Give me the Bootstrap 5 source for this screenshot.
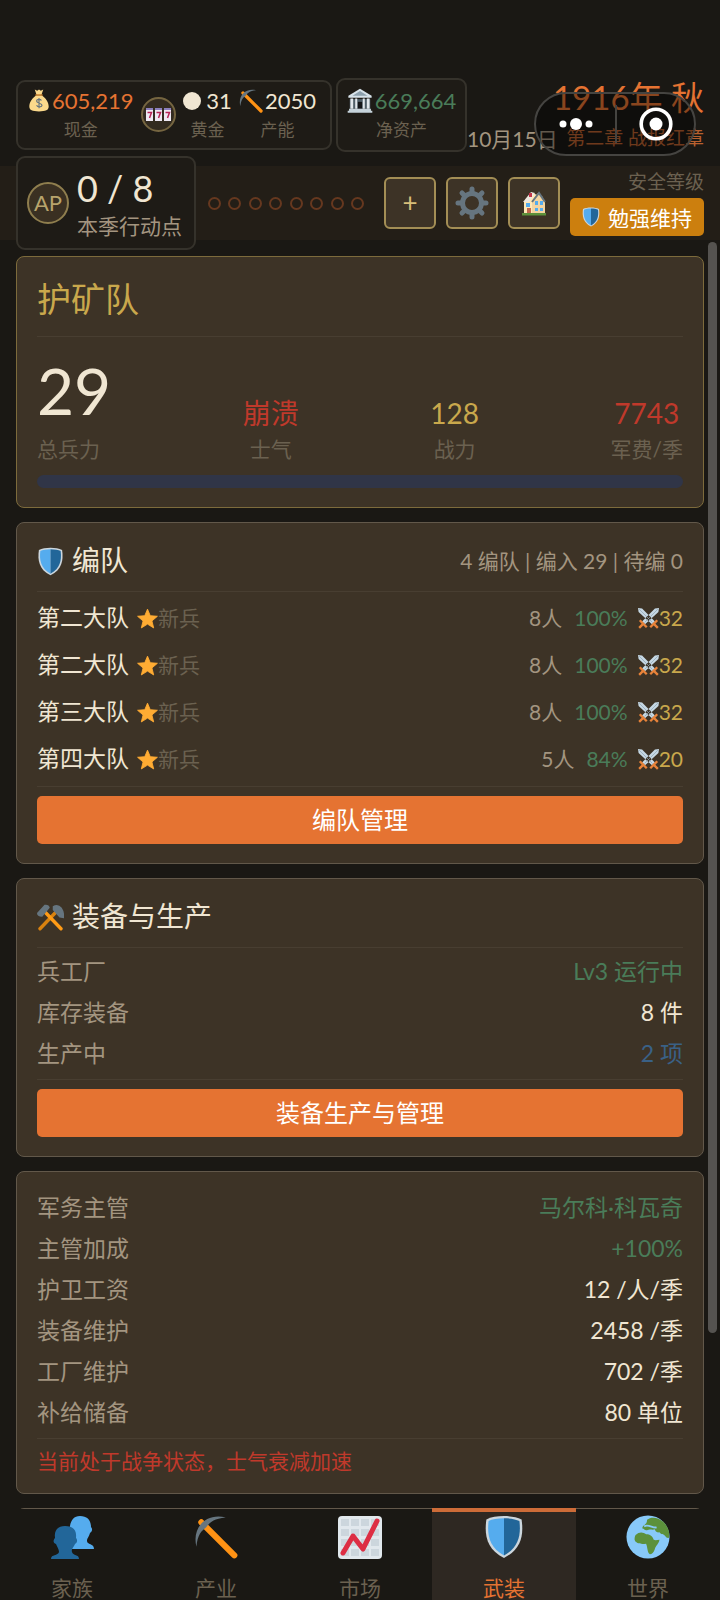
<!DOCTYPE html>
<html lang="zh-CN">
<head>
<meta charset="utf-8">
<meta name="viewport" content="width=device-width, initial-scale=1">
<title>护矿队</title>
<link href="https://cdn.jsdelivr.net/npm/bootstrap@5.3.0/dist/css/bootstrap.min.css" rel="stylesheet">
<style>
:root{--ink:#f0e6d2;--dim:#a39580;--faint:#6b6150;--gold:#c9a84c;--orange:#e57332;--green:#4a7c59;--red:#c0392b;--blue:#3a6186;--bg:#1a1814;--panel:#3d3326}
body{background:var(--bg);color:var(--ink);font-family:Lato,"Noto Sans CJK SC",sans-serif;font-size:23px;line-height:1.3}
.screen{height:100vh}
.c-dim{color:var(--dim)}.c-faint{color:var(--faint)}.c-gold{color:var(--gold)}.c-orange{color:var(--orange)}
.c-green{color:var(--green)}.c-red{color:var(--red)}.c-blue{color:var(--blue)}.c-rust{color:#b8602f}
.fs-tag{font-size:17px}.fs-sub{font-size:19px}.fs-note{font-size:21px}.fs-val{font-size:28px}
svg{display:block;flex:none}
/* header */
.topbar{padding:77px 16px 14px}
.stat-box{border:2px solid #35322b;border-radius:9px;background:#1e1b16}
.res-box{height:70px;width:316px;padding:0 10px}
.asset-box{height:74px;width:131px;margin-left:4px}
.stat-num{font-size:22px;line-height:30px;gap:2px}
.stat-cell .fs-tag{line-height:28px}
.slot{width:35px;height:35px;border:2px solid #756540;border-radius:50%;background:#332b20;padding:0}
.orb{width:18px;height:18px;margin-right:3px;border-radius:50%;background:var(--ink)}
.season{font-size:33px;line-height:40px}
.capsule{right:24px;top:92px;width:162px;height:64px;border:2px solid #454441;border-radius:32px;background:rgba(0,0,0,.4)}
.capsule button{background:none;border:0;padding:0}
.capsule .split{width:2px;height:38px;background:#454441}
.ap-bar{background:#231e17;height:74px;padding:0 16px}
.ap-box{width:180px;height:94px;margin:-10px 0;padding:0 9px}
.ap-mark{width:42px;height:42px;border:2px solid #8f7e4e;border-radius:50%;background:#3a3022;color:#b8a46c;font-size:22px}
.ap-count{font-size:36px;line-height:40px}
.pips{margin:0 20px 0 12px}
.pip{width:13px;height:13px;border:2px solid #66381f;border-radius:50%}
.tools{gap:10px;margin-right:10px}
.tool{width:52px;height:52px;border:2px solid #a38e55;border-radius:6px;background:var(--panel);color:#d8bf7a;padding:0;font-size:26px}
.status{background:#cc7f0e;border-radius:5px;width:134px;height:38px}
/* content */
.feed{padding:16px 16px 0}
.panel{background:var(--panel);border:1px solid #62584a;border-radius:8px;padding:0 20px 19px;margin-bottom:14px}
.panel-gold{border-color:#7d6b3c}
.rule{border-bottom:1px solid #483e31}
.title-lg{font-size:34px;height:80px;margin:0;padding-top:6px;font-weight:400}
.title-md{font-size:28px;margin:0;font-weight:400}
.head{height:69px;padding-top:9px}
.stats{padding-top:22px}
.big{font-size:64px;line-height:64px}
.meter{height:13px;border-radius:7px;background:#303547;margin-top:12px}
.squads{padding:3px 0}
.squad{height:47px}
.health{margin:0 10px 0 12px}
.line{height:41px}
.rows{padding:4px 0}
.act{background:var(--orange);color:#fff;border:0;border-radius:5px;height:48px;font-size:24px;padding:0;margin-top:9px}
.thumb{right:3px;top:2px;width:9px;height:86%;border-radius:5px;background:#555350}
/* tabs */
.tabs{height:91px;background:var(--bg)}
.tabs a{flex:1 1 0;color:var(--faint);font-size:21px;padding-top:6px;gap:15px}
.tabs a.on{color:var(--orange);background:#2e2822;border-top:4px solid #cd6c38;margin-top:-1px;padding-top:3px}
</style>
</head>
<body>
<svg width="0" height="0" class="position-absolute" aria-hidden="true">
<symbol id="shield" viewBox="0 0 36 40"><path d="M18 1C12 1 6 2 2 4 0 18 2 31 18 39 34 31 36 18 34 4 30 2 24 1 18 1Z" fill="#ccd6dd"/><path d="M18 3C12 3 7 4 4 5.500 2.500 18 4.500 29.500 18 36.800Z" fill="#55acee"/><path d="M18 3c6 0 11 1 14 2.500C33.500 18 31.500 29.500 18 36.800Z" fill="#226699"/></symbol>
<symbol id="star" viewBox="0 0 36 36"><path d="M18 2l4.700 11.200 12.300 1-9.400 8 3 12L18 27.600 7.400 34.200l3-12-9.400-8 12.300-1Z" fill="#ffac33" stroke="#ffac33" stroke-width="1.500" stroke-linejoin="round"/></symbol>
<symbol id="pick" viewBox="0 0 36 36"><path d="M6 6L33 33" stroke="#ff9214" stroke-width="5" stroke-linecap="round"/><path d="M2 26C-2 10 10-2 26 2 16 3 13 6 10 10 6 13 3 16 2 26Z" fill="#66757f"/></symbol>
<symbol id="swords" viewBox="0 0 36 36"><path d="M0 0l7 1 22 22-5 5L1 7ZM36 0l-7 1L7 23l5 5L35 7Z" fill="#c6d8e4"/><path d="M2 2l23 23M34 2L11 25" stroke="#8ea2b0" stroke-width="1.200"/><path d="M3 21l12 12M33 21L21 33M8 28l-6 6M28 28l6 6" stroke="#e8833a" stroke-width="4"/></symbol>
<symbol id="hammers" viewBox="0 0 36 36"><path d="M4 33L26 10" stroke="#d9820f" stroke-width="4.500" stroke-linecap="round"/><path d="M32 33L10 10" stroke="#ff9b16" stroke-width="4.500" stroke-linecap="round"/><path d="M0 12L10 1q6-1 7 4L7 17Q0 17 0 12ZM21 3q7-4 12 2 4 6 3 14l-6-1-9-10Z" fill="#66757f"/></symbol>
<symbol id="bag" viewBox="0 0 36 38"><path d="M11 1l4 2 3-2 3 2 4-2-3 9c7 5 12 12 12 19 0 6-5 8-16 8S2 35 2 29C2 22 7 15 14 10Z" fill="#fbd98b"/><path d="M12 10h12" stroke="#bf7a2c" stroke-width="2.500"/><path d="M22 19c-2-3-8-2-8 1 0 4 9 3 9 7 0 3-7 4-9 0M18 15v17" stroke="#67757f" stroke-width="2" fill="none"/></symbol>
<symbol id="bank" viewBox="0 0 38 36"><path d="M19 1L36 11v3H2v-3Z" fill="#d8e3ea"/><path d="M19 4l11 7H8Z" fill="#8da0ad"/><path d="M4 16h30v14H4Z" fill="#50606a"/><path d="M5 15h4v15H5ZM12 15h3v15h-3ZM23 15h3v15h-3ZM29 15h4v15h-4Z" fill="#e1e8ed"/><path d="M16 20h6v10h-6Z" fill="#14171a"/><path d="M3 30h32v3H3ZM1 33h36v3H1Z" fill="#c5d2da"/></symbol>
</svg>
<div class="screen d-flex flex-column overflow-hidden position-relative">
  <header>
    <div class="topbar d-flex align-items-center">
      <div class="stat-box res-box d-flex align-items-center justify-content-between flex-shrink-0">
        <div class="stat-cell text-center c-orange"><div class="stat-num d-flex align-items-center"><svg width="22" height="23"><use href="#bag"/></svg>605,219</div><div class="fs-tag c-faint">现金</div></div>
        <button class="slot d-flex align-items-center justify-content-center" aria-label="老虎机"><svg width="25" height="15" viewBox="0 0 25 15"><path d="M0 1h7v13H0ZM9 1h7v13H9ZM18 1h7v13h-7Z" fill="#eee8f2"/><path d="M0 1h7v2H0ZM9 1h7v2H9ZM18 1h7v2h-7Z" fill="#8c80be"/><path d="M1.500 5.500h4l-2 5.500M10.500 5.500h4l-2 5.500M19.500 5.500h4l-2 5.500" stroke="#b72457" stroke-width="1.500" fill="none"/></svg></button>
        <div class="stat-cell text-center"><div class="stat-num d-flex align-items-center"><span class="orb"></span>31</div><div class="fs-tag c-faint">黄金</div></div>
        <div class="stat-cell text-center pe-1"><div class="stat-num d-flex align-items-center"><svg width="24" height="24"><use href="#pick"/></svg>2050</div><div class="fs-tag c-faint">产能</div></div>
      </div>
      <div class="stat-box asset-box d-flex align-items-center justify-content-center flex-shrink-0">
        <div class="stat-cell text-center c-green"><div class="stat-num d-flex align-items-center"><svg width="26" height="25"><use href="#bank"/></svg>669,664</div><div class="fs-tag c-faint">净资产</div></div>
      </div>
      <div class="flex-grow-1 text-end text-nowrap">
        <div class="season c-orange">1916年 秋</div>
        <div class="d-flex justify-content-between align-items-center pt-2"><span class="c-dim fs-note">10月15日</span><span class="fs-sub c-rust">第二章 战报红章</span></div>
      </div>
    </div>
    <div class="capsule position-absolute d-flex align-items-center">
      <button class="flex-fill d-flex justify-content-center" aria-label="更多"><svg width="36" height="14" fill="#fff"><circle cx="5" cy="7" r="3.500"/><circle cx="18" cy="7" r="6"/><circle cx="31" cy="7" r="3.500"/></svg></button>
      <span class="split"></span>
      <button class="flex-fill d-flex justify-content-center" aria-label="关闭"><svg width="34" height="34"><circle cx="17" cy="17" r="14.800" fill="none" stroke="#fff" stroke-width="3.600"/><circle cx="17" cy="17" r="6.500" fill="#fff"/></svg></button>
    </div>
    <div class="ap-bar d-flex align-items-center">
      <div class="stat-box ap-box d-flex align-items-center gap-2 flex-shrink-0">
        <div class="ap-mark d-flex align-items-center justify-content-center flex-shrink-0">AP</div>
        <div class="text-nowrap"><div class="ap-count">0 / 8</div><div class="fs-note c-dim mt-1">本季行动点</div></div>
      </div>
      <div class="pips d-flex flex-fill justify-content-between"><i class="pip"></i><i class="pip"></i><i class="pip"></i><i class="pip"></i><i class="pip"></i><i class="pip"></i><i class="pip"></i><i class="pip"></i></div>
      <div class="tools d-flex flex-shrink-0">
        <button class="tool" aria-label="增加">+</button>
        <button class="tool d-flex align-items-center justify-content-center" aria-label="设置"><svg width="34" height="34" viewBox="-17 -17 34 34"><circle r="9.500" fill="none" stroke="#66757f" stroke-width="5"/><g stroke="#66757f" stroke-width="5" stroke-linecap="round"><path d="M0-11.500V-14M0 11.500V14M-11.500 0H-14M11.500 0H14M8-8l2-2M-8 8l-2 2M8 8l2 2M-8-8l-2-2"/></g></svg></button>
        <button class="tool d-flex align-items-center justify-content-center" aria-label="家园"><svg width="26" height="26" viewBox="0 0 26 26"><path d="M3 12l8-9 11 4v17H3Z" fill="#ffe8b6"/><path d="M11 11l6-8 7 9v12H11Z" fill="#f3d4a0"/><path d="M2 12L10 2l4 1-6 9Z" fill="#eee8df"/><path d="M11 12l7-9 6 9" stroke="#66757f" stroke-width="2" fill="none"/><path d="M8 3h3v4H8Z" fill="#c1364b"/><path d="M5 13h4v4H5ZM14 11h3v4h-3ZM19 11h3v4h-3ZM14 18h3v3h-3ZM19 18h3v3h-3Z" fill="#55acee"/><path d="M6 18h4v6H6Z" fill="#c1694f"/><path d="M1 23h24v2.500H1Z" fill="#5c913b"/></svg></button>
      </div>
      <div class="text-end flex-shrink-0"><div class="fs-sub c-faint lh-sm mb-1">安全等级</div>
        <div class="status fs-note text-white d-flex align-items-center justify-content-center gap-2"><svg width="18" height="20"><use href="#shield"/></svg>勉强维持</div></div>
    </div>
  </header>

  <div class="flex-grow-1 position-relative overflow-hidden">
  <main class="feed">
    <section class="panel panel-gold">
      <h1 class="title-lg rule c-gold d-flex align-items-center">护矿队</h1>
      <div class="stats d-flex justify-content-between align-items-end">
        <div><div class="big">29</div><div class="fs-note c-faint mt-2 pt-1">总兵力</div></div>
        <div class="text-center"><div class="fs-val c-red">崩溃</div><div class="fs-note c-faint mt-1">士气</div></div>
        <div class="text-center"><div class="fs-val c-gold">128</div><div class="fs-note c-faint mt-1">战力</div></div>
        <div class="text-center"><div class="fs-val c-red">7743</div><div class="fs-note c-faint mt-1">军费/季</div></div>
      </div>
      <div class="meter"></div>
    </section>

    <section class="panel">
      <div class="head rule d-flex align-items-center justify-content-between"><h2 class="title-md d-flex align-items-center gap-2"><svg width="27" height="29"><use href="#shield"/></svg>编队</h2><span class="fs-note c-dim">4 编队 | 编入 29 | 待编 0</span></div>
      <div class="squads rule">
        <div class="squad d-flex align-items-center"><span class="me-2">第二大队</span><svg width="21" height="21"><use href="#star"/></svg><span class="fs-note c-faint">新兵</span><span class="fs-note c-dim ms-auto">8人</span><span class="fs-note c-green health">100%</span><svg width="21" height="21"><use href="#swords"/></svg><span class="c-gold fs-note">32</span></div>
        <div class="squad d-flex align-items-center"><span class="me-2">第二大队</span><svg width="21" height="21"><use href="#star"/></svg><span class="fs-note c-faint">新兵</span><span class="fs-note c-dim ms-auto">8人</span><span class="fs-note c-green health">100%</span><svg width="21" height="21"><use href="#swords"/></svg><span class="c-gold fs-note">32</span></div>
        <div class="squad d-flex align-items-center"><span class="me-2">第三大队</span><svg width="21" height="21"><use href="#star"/></svg><span class="fs-note c-faint">新兵</span><span class="fs-note c-dim ms-auto">8人</span><span class="fs-note c-green health">100%</span><svg width="21" height="21"><use href="#swords"/></svg><span class="c-gold fs-note">32</span></div>
        <div class="squad d-flex align-items-center"><span class="me-2">第四大队</span><svg width="21" height="21"><use href="#star"/></svg><span class="fs-note c-faint">新兵</span><span class="fs-note c-dim ms-auto">5人</span><span class="fs-note c-green health">84%</span><svg width="21" height="21"><use href="#swords"/></svg><span class="c-gold fs-note">20</span></div>
      </div>
      <button class="act w-100 d-block">编队管理</button>
    </section>

    <section class="panel">
      <div class="head rule d-flex align-items-center"><h2 class="title-md d-flex align-items-center gap-2"><svg width="27" height="27"><use href="#hammers"/></svg>装备与生产</h2></div>
      <div class="rows rule">
        <div class="line d-flex align-items-center justify-content-between"><span class="c-dim">兵工厂</span><span class="c-green">Lv3 运行中</span></div>
        <div class="line d-flex align-items-center justify-content-between"><span class="c-dim">库存装备</span><span>8 件</span></div>
        <div class="line d-flex align-items-center justify-content-between"><span class="c-dim">生产中</span><span class="c-blue">2 项</span></div>
      </div>
      <button class="act w-100 d-block">装备生产与管理</button>
    </section>

    <section class="panel">
      <div class="rows rule pt-3">
        <div class="line d-flex align-items-center justify-content-between"><span class="c-dim">军务主管</span><span class="c-green">马尔科·科瓦奇</span></div>
        <div class="line d-flex align-items-center justify-content-between"><span class="c-dim">主管加成</span><span class="c-green">+100%</span></div>
        <div class="line d-flex align-items-center justify-content-between"><span class="c-dim">护卫工资</span><span>12 /人/季</span></div>
        <div class="line d-flex align-items-center justify-content-between"><span class="c-dim">装备维护</span><span>2458 /季</span></div>
        <div class="line d-flex align-items-center justify-content-between"><span class="c-dim">工厂维护</span><span>702 /季</span></div>
        <div class="line d-flex align-items-center justify-content-between"><span class="c-dim">补给储备</span><span>80 单位</span></div>
      </div>
      <div class="fs-note c-red pt-2">当前处于战争状态，士气衰减加速</div>
    </section>
    <section class="panel"></section>
  </main>
  <div class="thumb position-absolute"></div>
  </div>

  <nav class="tabs d-flex flex-shrink-0 position-relative">
    <a href="#" class="d-flex flex-column align-items-center text-decoration-none"><svg width="44" height="44" viewBox="0 0 44 44"><path d="M30 1c7 0 11 4 11 11 2 2 1 5-1 6-1 4-3 5-3 8 0 4 7 2 7 8H22V20c-3-3-3-5-2-9 1-6 4-10 10-10Z" fill="#55acee"/><path d="M15 11c8 0 12 4 11 12 2 2 1 5-1 6-1 3-4 5-3 8 1 4 7 2 7 7H1c0-5 7-3 8-7 0-3-2-5-3-8-3-1-3-4-1-6-1-8 3-12 10-12Z" fill="#226699"/></svg>家族</a>
    <a href="#" class="d-flex flex-column align-items-center text-decoration-none"><svg width="44" height="44"><use href="#pick"/></svg>产业</a>
    <a href="#" class="d-flex flex-column align-items-center text-decoration-none"><svg width="44" height="44" viewBox="0 0 44 44"><rect x="0" y="1" width="44" height="43" rx="4" fill="#e1e8ed"/><path d="M3 4h8v7H3ZM13 4h8v7h-8ZM23 4h8v7h-8ZM33 4h8v7h-8ZM3 14h8v7H3ZM13 14h8v7h-8ZM23 14h8v7h-8ZM33 14h8v7h-8ZM3 24h8v7H3ZM13 24h8v7h-8ZM23 24h8v7h-8ZM33 24h8v7h-8ZM3 34h8v7H3ZM13 34h8v7h-8ZM23 34h8v7h-8ZM33 34h8v7h-8Z" fill="#ccd6dd"/><path d="M5 38l10-17 10 13L39 6" stroke="#dd2e44" stroke-width="5" fill="none" stroke-linecap="round" stroke-linejoin="round"/></svg>市场</a>
    <a href="#" class="on d-flex flex-column align-items-center text-decoration-none" aria-current="page"><svg width="44" height="44"><use href="#shield"/></svg>武装</a>
    <a href="#" class="d-flex flex-column align-items-center text-decoration-none"><svg width="44" height="44" viewBox="0 0 46 46"><circle cx="23" cy="23" r="22.500" fill="#88c9f9"/><path d="M22 5c5-4 12-2 17 2 4 4 7 10 6 16 0 2-3 1-4-1-2-3-4-1-6-4-3 1-4-1-5-3-3 1-5-1-8 1-3 0-3-2-5-2 0-4 5-3 5-9Z" fill="#5c913b"/><path d="M10 21c4-4 8-3 11-1 4 0 7 2 8 6 2 1 4 0 6 0-1 5-4 6-5 10-1 3-3 5-5 5-3-2-2-6-4-11-5 1-11 0-12-4 0-2 0-3 1-5Z" fill="#5c913b"/><path d="M19 12c4-3 9 2 13 1M33 19l4 5" stroke="#88c9f9" stroke-width="2" fill="none"/></svg>世界</a>
  </nav>
</div>
<script src="https://cdn.jsdelivr.net/npm/bootstrap@5.3.0/dist/js/bootstrap.bundle.min.js"></script>
</body>
</html>
